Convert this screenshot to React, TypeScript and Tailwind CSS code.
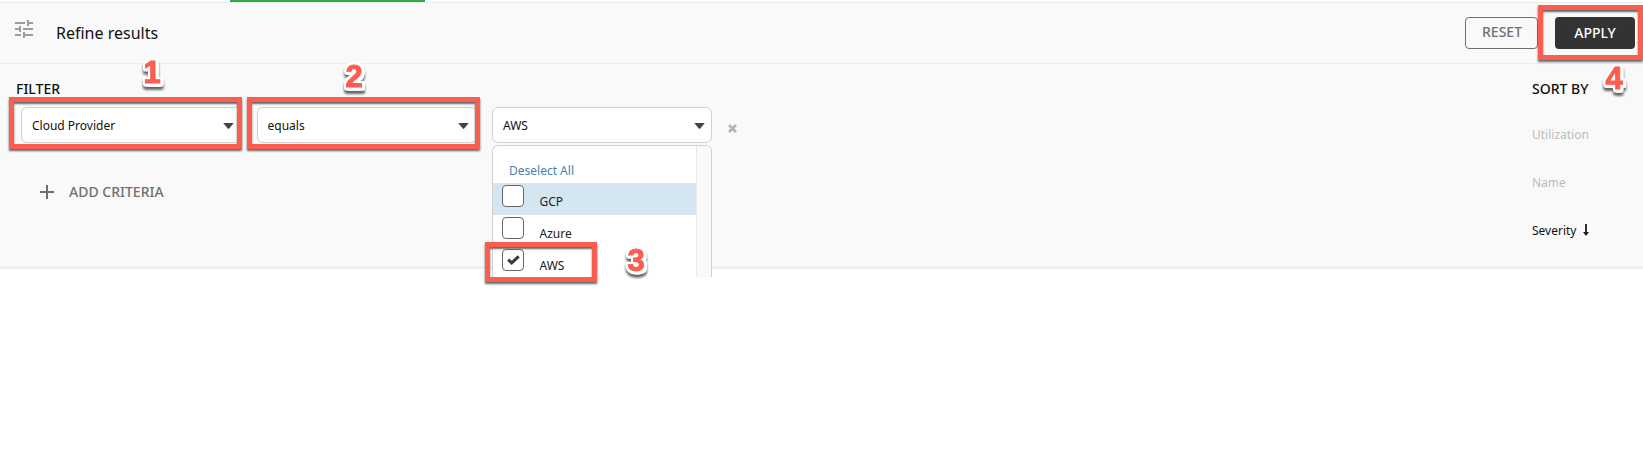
import React from "react";
import clsx from "clsx";

function TuneIcon() {
  return (
    <svg className="h-[18px] w-[18px]" viewBox="3 3 18 18" fill="#9b9b9b">
      <path d="M3 17v2h6v-2H3zM3 5v2h10V5H3zm10 16v-2h8v-2h-8v-2h-2v6h2zM7 9v2H3v2h4v2h2V9H7zm14 4v-2H11v2h10zm-6-4h2V7h4V5h-4V3h-2v6z" />
    </svg>
  );
}

function Select({ value }: { value: string }) {
  return (
    <div className="flex h-9 w-[220px] items-center justify-between rounded-[6px] border border-[#cfcfd4] bg-white pl-[10px] pr-[6.5px] pt-px text-[12px] text-[#111]">
      <span>{value}</span>
      <svg className="h-[6px] w-[11px]" viewBox="0 0 11 6" fill="#444">
        <path d="M0.2 0h10.6L6.2 5.6a1 1 0 0 1-1.4 0z" />
      </svg>
    </div>
  );
}

function Option({ label, checked, active }: { label: string; checked?: boolean; active?: boolean }) {
  return (
    <div className={clsx("flex h-8 shrink-0 items-start pl-[9px] pt-[2px]", active && "bg-[#d4e7f0]")}>
      <span className="flex h-[22px] w-[22px] items-center justify-center rounded-[4px] border border-[#666] bg-white">
        {checked && (
          <svg className="h-[10px] w-[13px]" viewBox="0 0 13 10" fill="none" stroke="#3a3a3a" strokeWidth="3">
            <path d="M1.2 4.6l3.5 3.3L11.7 1.3" />
          </svg>
        )}
      </span>
      <span className="ml-[15.5px] mt-2 text-[12px] leading-[18px] text-[#222]">{label}</span>
    </div>
  );
}

function Frame({ className }: { className: string }) {
  return (
    <div
      className={clsx(
        "pointer-events-none absolute z-20 border-[5px] border-[#fb5d50] shadow-[0_2px_2px_#666,inset_0_2px_2px_#666]",
        className,
      )}
    />
  );
}

function Step({ n, className }: { n: number; className: string }) {
  return (
    <span
      className={clsx(
        "pointer-events-none absolute z-20 w-7 text-center font-['Liberation_Sans',sans-serif] text-[31px] font-bold leading-9 text-[#fb5d50] [-webkit-text-stroke:1px_#fb5d50] [filter:drop-shadow(2px_0_0_white)_drop-shadow(-2px_0_0_white)_drop-shadow(0_2px_0_white)_drop-shadow(0_-2px_0_white)_drop-shadow(1px_1px_0_white)_drop-shadow(0_3px_1px_#666)]",
        className,
      )}
    >
      {n}
    </span>
  );
}

export default function App() {
  return (
    <div className="relative h-[453px] w-[1643px] overflow-hidden bg-white font-['Noto_Sans',sans-serif] text-[#111]">
      <div className="h-[2px] pl-[230px]">
        <div className="h-[2px] w-[195px] bg-[#2eab48]" />
      </div>
      <section className="h-[267px] border-b-[3px] border-t border-b-[#efefef] border-t-[#ececec] bg-[#f9f9f9]">
        <header className="flex h-[61px] items-start border-b border-[#ececec] pl-[15px] pr-2">
          <div className="mt-[17px]">
            <TuneIcon />
          </div>
          <h1 className="ml-[23px] mt-[18px] text-[16px] leading-[24px]">Refine results</h1>
          <div className="ml-auto mt-[14px] flex gap-[17px] text-[14px] font-medium">
            <button className="h-8 w-[73px] rounded-[4px] border border-[#707070] pb-[3px] pl-px text-[#707070]">RESET</button>
            <button className="h-8 w-20 rounded-[4px] bg-[#333] pb-px text-white">APPLY</button>
          </div>
        </header>
        <div className="flex justify-between">
          <div className="pt-[15px]">
            <h2 className="pl-4 text-[14px] font-medium leading-[20px]">FILTER</h2>
            <div className="mt-2 flex gap-[15.5px] pl-[21px]">
              <Select value="Cloud Provider" />
              <Select value="equals" />
              <div className="relative">
                <Select value="AWS" />
                <div className="absolute left-0 top-[38px] z-10 flex h-[132px] w-[220px] overflow-hidden rounded-t-[6px] border border-b-0 border-[#cfcfd4] bg-white">
                  <div className="flex min-w-0 flex-1 flex-col">
                    <div className="h-[37px] shrink-0 pl-4 pt-4 text-[12px] leading-[18px] text-[#4682b4]">Deselect All</div>
                    <Option label="GCP" active />
                    <Option label="Azure" />
                    <Option label="AWS" checked />
                  </div>
                  <div className="w-[15px] border-l border-[#e8e8e8] bg-[#fafafa]" />
                </div>
              </div>
              <svg className="mt-[17px] h-[9px] w-[9px]" viewBox="0 0 9 9" stroke="#b5b5b5" strokeWidth="2.7">
                <path d="M1 1l7 7M8 1L1 8" />
              </svg>
            </div>
            <button className="mt-[38px] flex items-center gap-[15px] pl-10 text-[14px] font-medium leading-[22px] text-[#707070]">
              <svg className="h-[14px] w-[14px]" viewBox="0 0 14 14" stroke="#707070" strokeWidth="2">
                <path d="M7 0v14M0 7h14" />
              </svg>
              ADD CRITERIA
            </button>
          </div>
          <aside className="w-[111px] pt-[15px] text-[12px] leading-[18px]">
            <h2 className="text-[14px] font-medium leading-[20px]">SORT BY</h2>
            <div className="mt-[27px] text-[#bcbcbc]">Utilization</div>
            <div className="mt-[30px] text-[#bcbcbc]">Name</div>
            <div className="mt-[30px] flex items-start gap-[7px]">
              Severity
              <svg className="mt-[2px] h-[12px] w-[6px]" viewBox="0 0 6 12" fill="#1c1c1c">
                <path d="M2.1 0h1.8v8H6l-3 4-3-4h2.1z" />
              </svg>
            </div>
          </aside>
        </div>
      </section>

      <Frame className="left-[9px] top-[97px] h-[52px] w-[233px]" />
      <Frame className="left-[247px] top-[97px] h-[52px] w-[233px]" />
      <Frame className="left-[485px] top-[242px] h-10 w-[112px]" />
      <Frame className="left-[1538px] top-[5px] h-[55px] w-[105px]" />
      <Step n={1} className="left-[138px] top-[55px]" />
      <Step n={2} className="left-[340px] top-[59px]" />
      <Step n={3} className="left-[622px] top-[243px]" />
      <Step n={4} className="left-[1600px] top-[61px]" />
    </div>
  );
}
